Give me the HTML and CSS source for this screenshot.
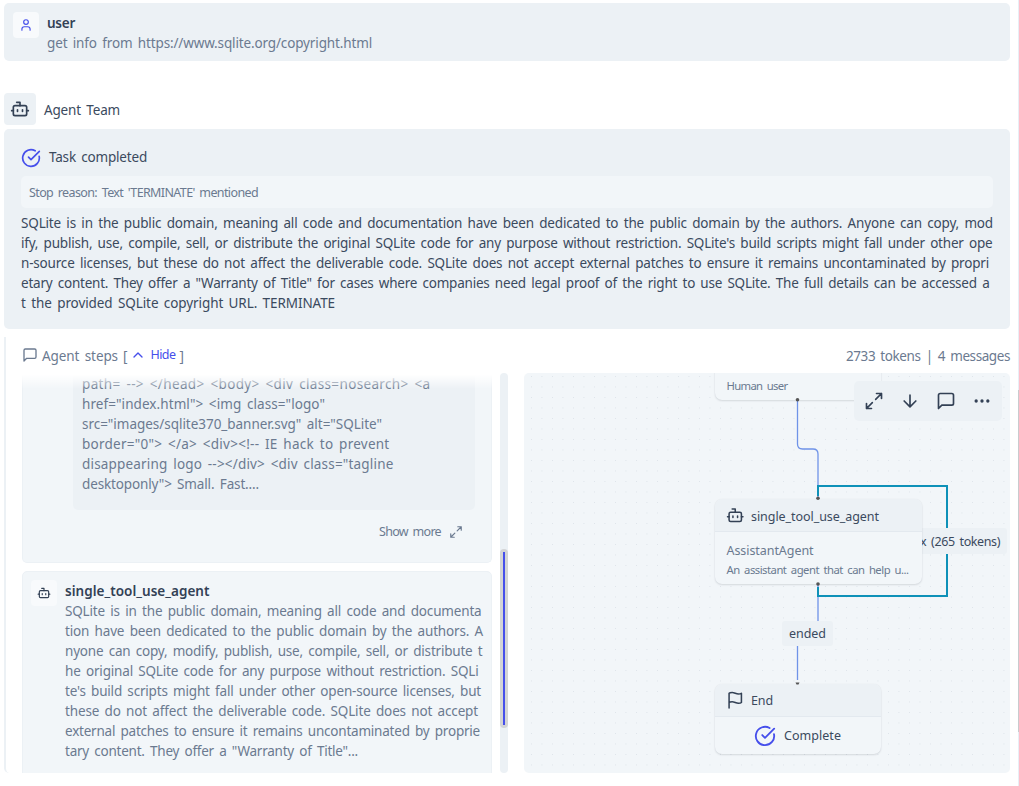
FILE: index.html
```html
<!DOCTYPE html>
<html lang="en">
<head>
<meta charset="utf-8">
<title>Agent Team</title>
<link rel="stylesheet" href="styles.css">
</head>
<body>
<svg class="defs" aria-hidden="true">
  <symbol id="bot" viewBox="0 0 24 24"><path d="M12 8V4H8"/><rect width="16" height="12" x="4" y="8" rx="2"/><path d="M2 14h2M20 14h2M15 13v2M9 13v2"/></symbol>
  <symbol id="user" viewBox="0 0 24 24"><path d="M19 21v-2a4 4 0 0 0-4-4H9a4 4 0 0 0-4 4v2"/><circle cx="12" cy="7" r="4"/></symbol>
  <symbol id="check" viewBox="0 0 24 24"><path d="M21.801 10A10 10 0 1 1 17 3.335"/><path d="m9 11 3 3L22 4"/></symbol>
  <symbol id="message" viewBox="0 0 24 24"><path d="M21 15a2 2 0 0 1-2 2H7l-4 4V5a2 2 0 0 1 2-2h14a2 2 0 0 1 2 2z"/></symbol>
  <symbol id="expand" viewBox="0 0 24 24"><path d="M15 3h6v6M9 21H3v-6M21 3l-7 7M3 21l7-7"/></symbol>
  <symbol id="down" viewBox="0 0 24 24"><path d="M12 5v14M19 12l-7 7-7-7"/></symbol>
  <symbol id="dots" viewBox="0 0 24 24"><circle cx="12" cy="12" r="1"/><circle cx="19" cy="12" r="1"/><circle cx="5" cy="12" r="1"/></symbol>
  <symbol id="flag" viewBox="0 0 24 24"><path d="M4 15s1-1 4-1 5 2 8 2 4-1 4-1V3s-1 1-4 1-5-2-8-2-4 1-4 1zM4 22v-7"/></symbol>
  <symbol id="up" viewBox="0 0 24 24"><path d="m18 15-6-6-6 6"/></symbol>
</svg>
<div class="page">
  <main class="content">
    <section class="message user-message">
      <span class="avatar accent"><svg class="icon s14"><use href="#user"/></svg></span>
      <div class="message-body">
        <div class="name"><span data-w="28">user</span></div>
        <div><span data-w="325">get info from https://www.sqlite.org/copyright.html</span></div>
      </div>
    </section>

    <header class="team">
      <span class="team-avatar"><svg class="icon s20"><use href="#bot"/></svg></span>
      <span class="team-name" data-w="76">Agent Team</span>
    </header>

    <section class="result">
      <div class="result-title"><svg class="icon s20 accent"><use href="#check"/></svg><span data-w="98">Task completed</span></div>
      <div class="reason"><span data-w="229">Stop reason: Text 'TERMINATE' mentioned</span></div>
      <div class="lines">
        <div><span data-w="972">SQLite is in the public domain, meaning all code and documentation have been dedicated to the public domain by the authors. Anyone can copy, mod</span></div>
        <div><span data-w="971.5">ify, publish, use, compile, sell, or distribute the original SQLite code for any purpose without restriction. SQLite's build scripts might fall under other ope</span></div>
        <div><span data-w="968">n-source licenses, but these do not affect the deliverable code. SQLite does not accept external patches to ensure it remains uncontaminated by propri</span></div>
        <div><span data-w="968.5">etary content. They offer a "Warranty of Title" for cases where companies need legal proof of the right to use SQLite. The full details can be accessed a</span></div>
        <div><span data-w="314">t the provided SQLite copyright URL. TERMINATE</span></div>
      </div>
    </section>

    <section class="steps">
      <div class="steps-head">
        <svg class="icon s16 steps-icon"><use href="#message"/></svg>
        <span class="steps-label" data-w="76">Agent steps</span>
        <span>[</span>
        <span class="hide accent"><svg class="icon s16"><use href="#up"/></svg><span data-w="25">Hide</span></span>
        <span>]</span>
        <span class="totals"><span data-w="164">2733 tokens | 4 messages</span></span>
      </div>
      <div class="panes">
        <div class="feed">
          <article class="card first">
            <div class="code">
              <div><span data-w="348.5">path= --&gt; &lt;/head&gt; &lt;body&gt; &lt;div class=nosearch&gt; &lt;a</span></div>
              <div><span data-w="243">href="index.html"&gt; &lt;img class="logo"</span></div>
              <div><span data-w="300">src="images/sqlite370_banner.svg" alt="SQLite"</span></div>
              <div><span data-w="307.5">border="0"&gt; &lt;/a&gt; &lt;div&gt;&lt;!-- IE hack to prevent</span></div>
              <div><span data-w="311.5">disappearing logo --&gt;&lt;/div&gt; &lt;div class="tagline</span></div>
              <div><span data-w="177">desktoponly"&gt; Small. Fast....</span></div>
            </div>
            <div class="more"><span data-w="62">Show more</span><svg class="icon s16"><use href="#expand"/></svg></div>
          </article>
          <article class="card second">
            <span class="avatar"><svg class="icon s14"><use href="#bot"/></svg></span>
            <div class="message-body">
              <div class="name"><span data-w="144.5">single_tool_use_agent</span></div>
              <div><span data-w="416.5">SQLite is in the public domain, meaning all code and documenta</span></div>
              <div><span data-w="418">tion have been dedicated to the public domain by the authors. A</span></div>
              <div><span data-w="417.5">nyone can copy, modify, publish, use, compile, sell, or distribute t</span></div>
              <div><span data-w="413.5">he original SQLite code for any purpose without restriction. SQLi</span></div>
              <div><span data-w="416">te's build scripts might fall under other open-source licenses, but</span></div>
              <div><span data-w="413">these do not affect the deliverable code. SQLite does not accept</span></div>
              <div><span data-w="415">external patches to ensure it remains uncontaminated by proprie</span></div>
              <div><span data-w="293">tary content. They offer a "Warranty of Title"...</span></div>
            </div>
          </article>
        </div>
        <div class="scrollbar"><div class="thumb"></div></div>
        <div class="graph">
          <svg class="edges" viewBox="524 373 486 400">
            <g class="edge"><path d="M797.5 400V444Q797.5 449 802.5 449H813Q818 449 818 454V498"/><path d="M818 584V634H797.5V680"/></g>
            <path class="loop" d="M818 587V596H947V486H818V496"/>
          </svg>
          <div class="edge-label tokens"><span data-w="80">x (265 tokens)</span></div>
          <div class="edge-label ended"><span data-w="37">ended</span></div>
          <div class="node human"><span data-w="61">Human user</span></div>
          <div class="node agent">
            <div class="node-head"><svg class="icon s20"><use href="#bot"/></svg><span data-w="128">single_tool_use_agent</span></div>
            <div class="node-body">
              <div class="kind"><span data-w="87">AssistantAgent</span></div>
              <div class="desc"><span data-w="182">An assistant agent that can help u...</span></div>
            </div>
          </div>
          <div class="node end">
            <div class="node-head"><svg class="icon s20"><use href="#flag"/></svg><span data-w="22">End</span></div>
            <div class="complete"><svg class="icon s24 accent"><use href="#check"/></svg><span data-w="57">Complete</span></div>
          </div>
          <svg class="handles" viewBox="524 373 486 400">
            <circle cx="797.5" cy="399.7" r="1.8"/><circle cx="818" cy="498.3" r="1.8"/><circle cx="818" cy="584" r="1.8"/><path d="M795.5 682.5h4l-1 2h-2z"/>
          </svg>
          <div class="toolbar">
            <svg class="icon s20"><use href="#expand"/></svg>
            <svg class="icon s20"><use href="#down"/></svg>
            <svg class="icon s20"><use href="#message"/></svg>
            <svg class="icon s20"><use href="#dots"/></svg>
          </div>
        </div>
      </div>
    </section>
  </main>
  <div class="page-scroll"><div class="page-thumb"></div></div>
</div>
<script src="fit.js"></script>
</body>
</html>
```
FILE: styles.css
```css
* { box-sizing: border-box; }
body {
  margin: 0;
  background: #fff;
  color: #3b4a5e;
  font: 13.5px/20px "Noto Sans", "Open Sans", sans-serif;
  word-spacing: 2px;
  white-space: nowrap;
  overflow: hidden;
}
.defs { position: absolute; width: 0; height: 0; }
.page { display: flex; height: 786px; }
.content { width: 1018px; padding: 3px 8px 0 4px; }
.page-scroll { width: 1px; padding-top: 390px; background: #e8eef5; }
.page-thumb { height: 342px; background: #c9cbce; }

.icon { fill: none; stroke: currentColor; stroke-width: 2; stroke-linecap: round; stroke-linejoin: round; flex: none; display: block; }
.s14 { width: 14px; height: 14px; }
.s16 { width: 16px; height: 16px; }
.s20 { width: 20px; height: 20px; }
.s24 { width: 24px; height: 24px; }
.accent { color: #464feb; }

.message { display: flex; gap: 8px; height: 58px; padding: 9px; background: #ecf1f5; border-radius: 5px; }
.avatar { display: flex; align-items: center; justify-content: center; flex: none; width: 26px; height: 26px; background: #f8fafc; border-radius: 4px; }
.avatar:not(.accent) { color: #334155; }
.message-body { color: #6b7a90; margin-top: 1px; }
.name { color: #334155; font-weight: 600; }

.team { display: flex; align-items: center; gap: 8px; margin-top: 32px; height: 32px; }
.team-avatar { display: flex; align-items: center; justify-content: center; width: 32px; height: 32px; background: #ecf1f5; border-radius: 4px; color: #334155; }
.team-name { padding-top: 2px; }

.result { margin-top: 4px; height: 200px; padding: 18px 17px; background: #ecf1f5; border-radius: 5px; }
.result-title { display: flex; align-items: center; gap: 8px; height: 20px; }
.result-title .icon { margin-top: 2px; }
.reason { height: 32px; margin: 9px 0 5px; padding: 0 8px; background: #f2f6f9; color: #6b7a90; border-radius: 5px; font-size: 12.5px; line-height: 33px; }

.steps { margin-top: 8px; height: 436px; padding-left: 16px; border-left: 2px solid #ecf1f5; border-bottom-left-radius: 5px; color: #6b7a90; }
.steps-head { display: flex; align-items: center; height: 36px; padding-top: 2px; }
.steps-icon { margin-top: -2px; }
.steps-label { margin: 0 5px 0 4px; }
.hide { display: flex; align-items: center; gap: 4px; margin: -2px 4px 0 3px; font-size: 12.5px; }
.totals { margin-left: auto; }
.panes { display: flex; height: 400px; }
.feed { position: relative; width: 470px; height: 400px; overflow: hidden; }
.feed::before { content: ""; position: absolute; inset: 0 0 auto; height: 16px; background: linear-gradient(#fff 10%, #ffffff00); }
.card { background: #f2f6f9; border: 1px solid #ecf1f5; border-radius: 5px; }
.first { height: 190px; padding: 0 16px 0 50px; border-top: 0; border-radius: 0 0 5px 5px; }
.code { height: 137px; padding: 1px 9px; background: #ecf1f5; border-radius: 0 0 5px 5px; }
.more { display: flex; align-items: center; justify-content: flex-end; gap: 8px; height: 20px; margin-top: 12px; padding-right: 12px; font-size: 12.5px; }
.more .icon { width: 14px; height: 14px; }
.second { display: flex; gap: 8px; height: 220px; margin-top: 8px; padding: 8px; }
.scrollbar { width: 8px; height: 400px; margin: 0 16px 0 8px; padding-top: 176px; background: #ecf1f5; border-radius: 4px; }
.thumb { display: flex; width: 8px; height: 179px; padding: 3px; background: #d3d4d6; border-radius: 4px; }
.thumb::before { content: ""; width: 2px; background: #464feb; }

/* Free canvas: nodes and edge labels carry their own coordinates. */
.graph { position: relative; flex: 1; overflow: hidden; border-radius: 5px; background: radial-gradient(circle at 50% 50%, #dde3e9 0.4px, transparent 0.75px) 2.2px -1.8px / 10.5px 10.5px #f2f6f9; color: #3b4a5e; font-size: 12.5px; }
.edges, .handles { position: absolute; inset: 0; width: 486px; height: 400px; fill: none; }
.edge { stroke: #6f93e8; stroke-width: 1.3; }
.loop { stroke: #0e91b8; stroke-width: 2; }
.handles { fill: #555; }
.edge-label { position: absolute; height: 26px; line-height: 28px; background: #ecf1f5; border-radius: 3px; }
.tokens { left: 330px; top: 155px; width: 153px; padding-right: 7px; text-align: right; }
.ended { left: 258px; top: 248px; width: 51px; height: 25px; line-height: 26px; text-align: center; }
.node { position: absolute; left: 190.5px; overflow: hidden; background: #f2f6f9; border-radius: 7px; box-shadow: 0 1px 2px #0f172a20, 0 0 1px #0f172a14; }
.human { top: -40px; width: 166px; height: 67px; padding: 43px 12px 0; color: #6b7a90; font-size: 11.3px; }
.agent { top: 126px; width: 207px; height: 85px; }
.end { top: 311px; width: 166px; height: 70px; }
.node-head { display: flex; align-items: center; gap: 7px; height: 33px; padding: 0 11px; background: #ecf1f5; border-bottom: 1px solid #e3e9ef; }
.node-head .icon { width: 18.5px; height: 18.5px; color: #334155; }
.node-head span { padding-top: 2px; }
.agent .node-head span { padding-top: 3px; }
.node-body { padding: 9px 12px; color: #6b7a90; }
.desc { font-size: 11.3px; line-height: 18px; }
.complete { display: flex; align-items: center; justify-content: center; gap: 8px; height: 37px; }
.complete .icon { width: 22px; height: 22px; }
.complete span { padding-top: 1px; }
.toolbar { position: absolute; left: 330px; top: 8px; display: flex; align-items: center; justify-content: space-between; width: 148px; height: 40px; padding: 0 10px; background: #ecf1f5; border-radius: 5px; color: #334155; }
```
FILE: fit.js
```js
// Track each line of text so that it fills its measured width.
document.querySelectorAll("[data-w]").forEach((el) => {
  const natural = el.getBoundingClientRect().width;
  const extra = (Number(el.dataset.w) - natural) / el.textContent.length;
  el.style.letterSpacing = extra.toFixed(4) + "px";
});
```
